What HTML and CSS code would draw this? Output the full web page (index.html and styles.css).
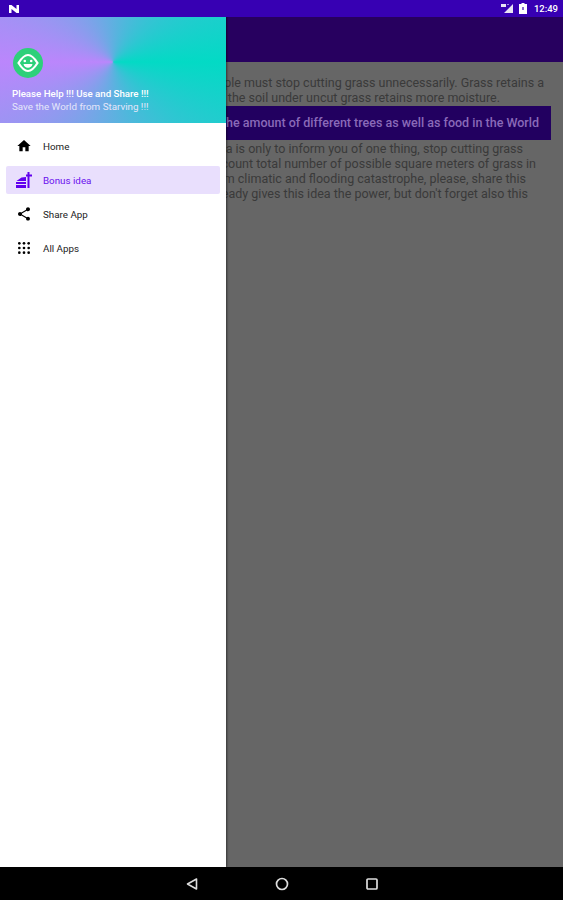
FILE: index.html
```html
<!DOCTYPE html>
<html lang="en">
<head>
    <meta charset="UTF-8">
    <meta name="viewport" content="width=device-width, initial-scale=1.0">
    <title>Bonus idea</title>
    <link rel="stylesheet" href="styles.css">
</head>
<body>
    <div class="status-bar">
        <svg class="status-logo" width="10" height="8" viewBox="0 0 12 10" preserveAspectRatio="none">
            <path d="M0 0h3l6 5V0h3v10H9L3 5v5H0z" fill="#fff"/>
        </svg>
        <div class="status-right">
            <svg width="13" height="10" viewBox="0 0 13 10">
                <path d="M0 0h5v3H0zM3 9l9-9v9z" fill="#e8e4f4"/>
                <path d="M6 0h2v1H6z" fill="#9a86d6"/>
            </svg>
            <svg width="8" height="11" viewBox="0 0 8 11">
                <path d="M2.500 0h3v1H8v10H0V1h2.500z" fill="#fff"/>
                <path d="M3.400 4h1.200v3H3.400z" fill="#3700b3"/>
            </svg>
            <span class="clock">12:49</span>
        </div>
    </div>

    <div class="screen">
        <div class="app-bar"></div>
        <div class="content">
            <p class="para">
                <span class="line">People must stop cutting grass unnecessarily. Grass retains a</span>
                <span class="line">lot of water, the soil under uncut grass retains more moisture.</span>
            </p>
            <div class="banner">This will increase the amount of different trees as well as food in the World</div>
            <p class="para">
                <span class="line">This idea is only to inform you of one thing, stop cutting grass</span>
                <span class="line">Taking into account total number of possible square meters of grass in</span>
                <span class="line">the World, from climatic and flooding catastrophe, please, share this</span>
                <span class="line">The app already gives this idea the power, but don't forget also this</span>
            </p>
        </div>

        <aside class="drawer">
            <header class="drawer-head">
                <div class="avatar">
                    <svg width="30" height="30" viewBox="0 0 30 30">
                        <circle cx="15" cy="15" r="15" fill="#2dd07a"/>
                        <path d="M15 7c4 0 7 4 9.500 8-2.500 4-5.500 8-9.500 8s-7-4-9.500-8C8 11 11 7 15 7z" fill="none" stroke="#fff" stroke-width="2.200"/>
                        <circle cx="11.800" cy="13" r="1.300" fill="#fff"/>
                        <circle cx="18.200" cy="13" r="1.300" fill="#fff"/>
                        <path d="M10.500 16h9c-.5 2.500-2.300 3.800-4.500 3.800s-4-1.300-4.500-3.800z" fill="#fff"/>
                    </svg>
                </div>
                <div class="head-title">Please Help !!! Use and Share !!!</div>
                <div class="head-sub">Save the World from Starving !!!</div>
            </header>
            <nav class="menu">
                <a class="menu-item">
                    <svg width="16" height="16" viewBox="0 0 24 24"><path d="M10 20v-6h4v6h5v-8h3L12 3 2 12h3v8z" fill="#000"/></svg>
                    <span>Home</span>
                </a>
                <a class="menu-item active">
                    <svg width="18" height="18" viewBox="0 0 18 18">
                        <path d="M12.500 1h2v2.500H17v2h-2.500V17h-2V5.500H11v-2h1.500z" fill="#6200ee"/>
                        <path d="M1.500 10l5-3.500L11 6v4zM1 11h10v2H1zM1 14h10v3H1z" fill="#6200ee"/>
                    </svg>
                    <span>Bonus idea</span>
                </a>
                <a class="menu-item">
                    <svg width="16" height="16" viewBox="0 0 24 24"><path d="M18 16.080c-.760 0-1.440.3-1.960.770L8.910 12.700c.05-.23.09-.46.09-.7s-.04-.47-.09-.7l7.050-4.110c.54.5 1.250.81 2.040.81 1.660 0 3-1.340 3-3s-1.340-3-3-3-3 1.340-3 3c0 .24.04.47.09.7L8.040 9.810C7.500 9.310 6.790 9 6 9c-1.660 0-3 1.340-3 3s1.340 3 3 3c.79 0 1.500-.31 2.040-.81l7.120 4.160c-.05.21-.08.43-.08.65 0 1.610 1.310 2.920 2.920 2.920s2.920-1.310 2.920-2.920-1.310-2.920-2.920-2.920z" fill="#000"/></svg>
                    <span>Share App</span>
                </a>
                <a class="menu-item">
                    <svg width="16" height="16" viewBox="0 0 24 24">
                        <g fill="#000">
                            <circle cx="5" cy="5" r="2"/><circle cx="12" cy="5" r="2"/><circle cx="19" cy="5" r="2"/>
                            <circle cx="5" cy="12" r="2"/><circle cx="12" cy="12" r="2"/><circle cx="19" cy="12" r="2"/>
                            <circle cx="5" cy="19" r="2"/><circle cx="12" cy="19" r="2"/><circle cx="19" cy="19" r="2"/>
                        </g>
                    </svg>
                    <span>All Apps</span>
                </a>
            </nav>
        </aside>
    </div>

    <div class="nav-bar">
        <svg width="14" height="14" viewBox="0 0 14 14"><path d="M11.500 2v10L2.500 7z" fill="none" stroke="#ddd" stroke-width="1.600" stroke-linejoin="round"/></svg>
        <svg width="14" height="14" viewBox="0 0 14 14"><circle cx="7" cy="7" r="5.500" fill="none" stroke="#ddd" stroke-width="1.700"/></svg>
        <svg width="14" height="14" viewBox="0 0 14 14"><rect x="2" y="2" width="10" height="10" rx="1" fill="none" stroke="#ddd" stroke-width="1.700"/></svg>
    </div>
</body>
</html>
```

FILE: styles.css
```css
* {
    margin: 0;
    padding: 0;
    box-sizing: border-box;
}

body {
    height: 900px;
    display: flex;
    flex-direction: column;
    font-family: 'Roboto', sans-serif;
    overflow: hidden;
    background: #000;
}

.status-bar {
    height: 17px;
    background: #3700b3;
    display: flex;
    align-items: center;
    justify-content: space-between;
    padding: 0 5px 0 9px;
    position: relative;
    z-index: 5;
}

.status-right {
    display: flex;
    align-items: center;
    gap: 5px;
}

.clock {
    color: #fff;
    font-size: 9.500px;
    font-weight: 500;
    margin-left: 2px;
}

/* everything under the drawer is drawn in its dimmed colours */
.screen {
    flex: 1;
    position: relative;
    background: #666;
    overflow: hidden;
}

.app-bar {
    height: 45px;
    background: #27005f;
}

.content {
    padding: 14px 12px 0 12px;
}

.para {
    font-size: 12.500px;
    line-height: 14.700px;
    color: #3a3a3a;
    white-space: nowrap;
    text-align: right;
}

.line {
    display: block;
}

.para:first-child .line:nth-child(1) { padding-right: 7px; }
.para:first-child .line:nth-child(2) { padding-right: 51px; }
.para:last-child .line:nth-child(1) { padding-right: 28px; }
.para:last-child .line:nth-child(2) { padding-right: 15px; }
.para:last-child .line:nth-child(3) { padding-right: 25px; }
.para:last-child .line:nth-child(4) { padding-right: 23px; }

.banner {
    background: #220060;
    color: #8a6ab8;
    font-size: 12.500px;
    font-weight: 500;
    height: 34px;
    line-height: 34px;
    margin: 1px 0 2px;
    padding-right: 12px;
    text-align: right;
    white-space: nowrap;
    overflow: hidden;
}

.drawer {
    position: absolute;
    top: -17px;
    left: 0;
    bottom: 0;
    width: 226px;
    background: #fff;
    box-shadow: 1px 0 2px rgba(0, 0, 0, 0.5);
    display: flex;
    flex-direction: column;
}

.drawer-head {
    height: 123px;
    padding: 48px 12px 0 13px;
    background: conic-gradient(from 90deg at 113px 62px, #03dac5 0deg, #bb86fc 180deg, #03dac5 360deg);
}

.avatar {
    height: 30px;
    margin-bottom: 9px;
}

.head-title {
    color: #fff;
    font-size: 9.700px;
    font-weight: 500;
    line-height: 13px;
    margin-left: -1px;
}

.head-sub {
    color: #e6e6fa;
    font-size: 9.800px;
    line-height: 13px;
    margin-left: -1px;
}

.menu {
    display: flex;
    flex-direction: column;
    gap: 6px;
    padding: 9px 6px 0;
}

.menu-item {
    height: 28px;
    display: flex;
    align-items: center;
    gap: 11px;
    padding-left: 10px;
    border-radius: 2px;
    font-size: 9.800px;
    color: #222;
}

.menu-item.active {
    background: #e9dffd;
    color: #6a10ee;
    padding-left: 9px;
    gap: 10px;
}

.nav-bar {
    height: 33px;
    background: #000;
    display: flex;
    align-items: center;
    justify-content: center;
    gap: 76px;
}
```
